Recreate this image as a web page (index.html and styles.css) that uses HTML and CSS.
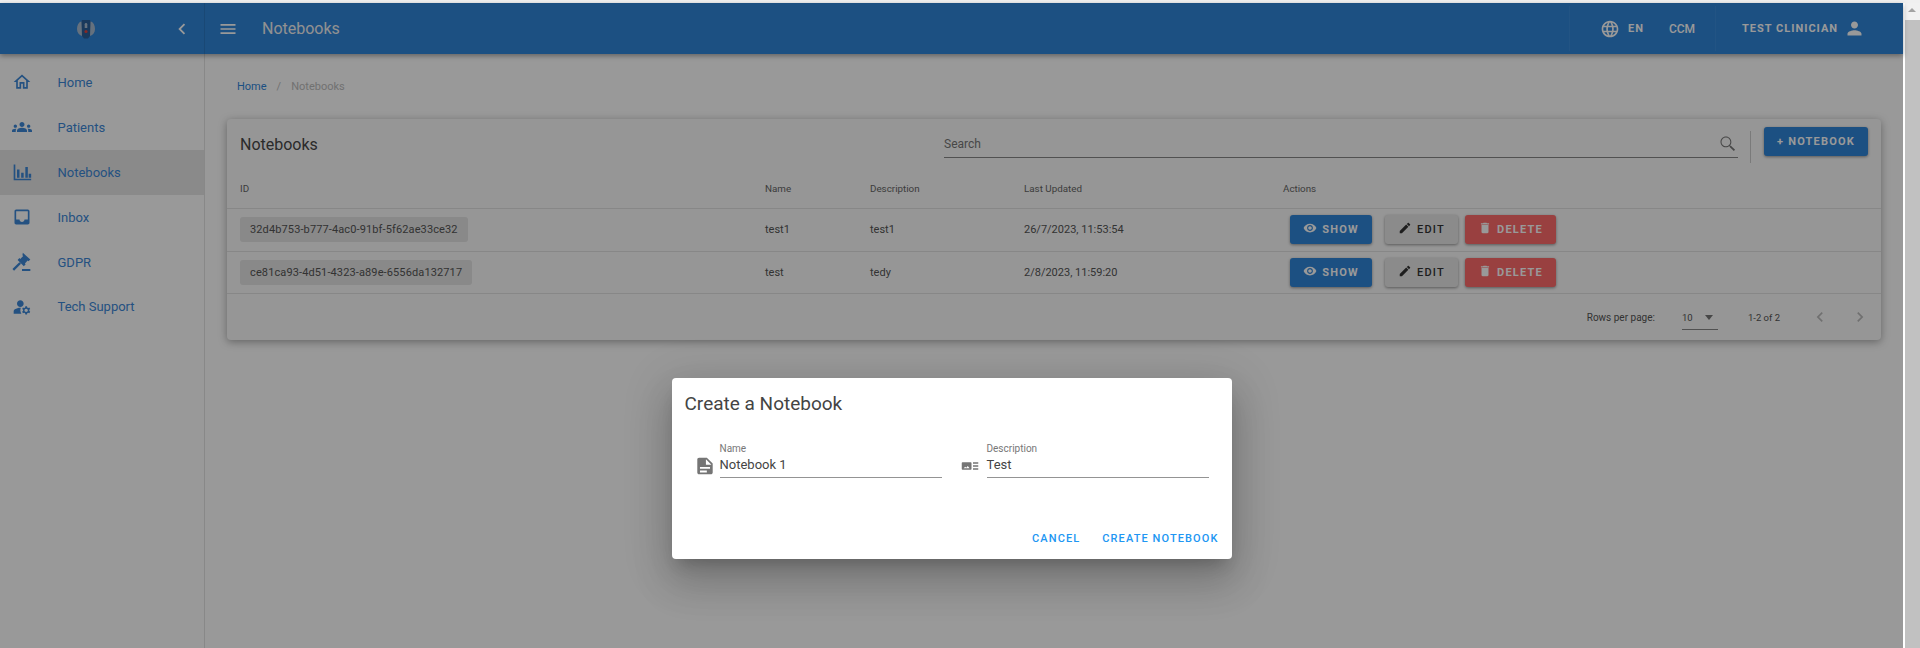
FILE: index.html
```html
<!DOCTYPE html>
<html lang="en">
<head>
<meta charset="utf-8">
<title>Notebooks</title>
<link rel="stylesheet" href="styles.css">
</head>
<body>
<svg class="sprite" width="0" height="0" aria-hidden="true">
  <defs>
    <symbol id="i-home" viewBox="0 0 24 24"><path d="M12 5.69l5 4.5V18h-2v-6H9v6H7v-7.81l5-4.5M12 3L2 12h3v8h6v-6h2v6h6v-8h3L12 3z"/></symbol>
    <symbol id="i-groups" viewBox="0 0 24 24"><path d="M12 12.75c1.63 0 3.07.39 4.24.9 1.08.48 1.76 1.56 1.76 2.73V18H6v-1.61c0-1.18.68-2.26 1.76-2.73 1.17-.52 2.61-.91 4.24-.91zM4 13c1.1 0 2-.9 2-2s-.9-2-2-2-2 .9-2 2 .9 2 2 2zm1.13 1.1c-.37-.06-.74-.1-1.13-.1-.99 0-1.93.21-2.78.58C.48 14.9 0 15.62 0 16.43V18h4.5v-1.61c0-.83.23-1.61.63-2.29zM20 13c1.1 0 2-.9 2-2s-.9-2-2-2-2 .9-2 2 .9 2 2 2zm4 3.43c0-.81-.48-1.53-1.22-1.85-.85-.37-1.79-.58-2.78-.58-.39 0-.76.04-1.13.1.4.68.63 1.46.63 2.29V18H24v-1.57zM12 6c1.66 0 3 1.34 3 3s-1.34 3-3 3-3-1.34-3-3 1.34-3 3-3z"/></symbol>
    <symbol id="i-chart" viewBox="0 0 24 24"><path d="M2 3h2v17h19v2H2zM6 9h3v10H6zM11 13h3v6h-3zM16 6h3v13h-3zM20 14h3v5h-3z"/></symbol>
    <symbol id="i-inbox" viewBox="0 0 24 24"><path d="M19 3H4.99c-1.11 0-1.98.89-1.98 2L3 19c0 1.1.88 2 1.99 2H19c1.1 0 2-.9 2-2V5c0-1.11-.9-2-2-2zm0 12h-4c0 1.66-1.35 3-3 3s-3-1.34-3-3H4.99V5H19v10z"/></symbol>
    <symbol id="i-gavel" viewBox="0 0 24 24"><path d="M13 1l9 8-2.200 2.200-1-.9-3.300 3.500.9 1-2.200 2.200-7.500-7.500 2.200-2.200 1 1 3.500-3.400-.9-1zM8.800 12.200l2 2-8.300 8.300-2-2zM12 20.500h10v2.300H12z"/></symbol>
    <symbol id="i-manage" viewBox="0 0 24 24"><path d="M10 12c2.21 0 4-1.79 4-4s-1.79-4-4-4-4 1.79-4 4 1.79 4 4 4zm.67 1.02c-.22-.01-.44-.02-.67-.02-2.42 0-4.68.67-6.61 1.82-.88.52-1.39 1.5-1.39 2.53V20h9.26c-.79-1.13-1.26-2.51-1.26-4 0-1.07.25-2.07.67-2.98zM20.75 16c0-.22-.03-.42-.06-.63l1.14-1.01-1-1.73-1.45.49c-.32-.27-.68-.48-1.08-.63L18 11h-2l-.3 1.49c-.4.15-.76.36-1.08.63l-1.45-.49-1 1.73 1.14 1.01c-.03.21-.06.41-.06.63s.03.42.06.63l-1.14 1.01 1 1.73 1.45-.49c.32.27.68.48 1.08.63L16 21h2l.3-1.49c.4-.15.76-.36 1.08-.63l1.45.49 1-1.73-1.14-1.01c.03-.21.06-.41.06-.63zM17 18c-1.1 0-2-.9-2-2s.9-2 2-2 2 .9 2 2-.9 2-2 2z"/></symbol>
    <symbol id="i-menu" viewBox="0 0 24 24"><path d="M3 18h18v-2H3v2zm0-5h18v-2H3v2zm0-7v2h18V6H3z"/></symbol>
    <symbol id="i-left" viewBox="0 0 24 24"><path d="M15.41 7.41L14 6l-6 6 6 6 1.41-1.41L10.83 12z"/></symbol>
    <symbol id="i-right" viewBox="0 0 24 24"><path d="M8.59 16.59L10 18l6-6-6-6-1.41 1.41L13.17 12z"/></symbol>
    <symbol id="i-globe" viewBox="0 0 24 24"><path d="M11.99 2C6.47 2 2 6.48 2 12s4.47 10 9.99 10C17.52 22 22 17.52 22 12S17.52 2 11.99 2zm6.93 6h-2.95c-.32-1.25-.78-2.45-1.38-3.56 1.84.63 3.37 1.91 4.33 3.56zM12 4.04c.83 1.2 1.48 2.53 1.91 3.96h-3.82c.43-1.43 1.08-2.76 1.91-3.96zM4.26 14C4.1 13.36 4 12.69 4 12s.1-1.36.26-2h3.38c-.08.66-.14 1.32-.14 2 0 .68.06 1.34.14 2H4.26zm.82 2h2.95c.32 1.25.78 2.45 1.38 3.56-1.84-.63-3.37-1.9-4.33-3.56zm2.95-8H5.08c.96-1.66 2.49-2.93 4.33-3.56C8.81 5.55 8.35 6.75 8.03 8zM12 19.96c-.83-1.2-1.48-2.53-1.91-3.96h3.82c-.43 1.43-1.08 2.76-1.91 3.96zM14.34 14H9.66c-.09-.66-.16-1.32-.16-2 0-.68.07-1.35.16-2h4.68c.09.65.16 1.32.16 2 0 .68-.07 1.34-.16 2zm.25 5.56c.6-1.11 1.06-2.31 1.38-3.56h2.95c-.96 1.65-2.49 2.93-4.33 3.56zM16.36 14c.08-.66.14-1.32.14-2 0-.68-.06-1.34-.14-2h3.38c.16.64.26 1.31.26 2s-.1 1.36-.26 2h-3.38z"/></symbol>
    <symbol id="i-person" viewBox="0 0 24 24"><path d="M12 12c2.21 0 4-1.79 4-4s-1.79-4-4-4-4 1.79-4 4 1.79 4 4 4zm0 2c-2.67 0-8 1.34-8 4v2h16v-2c0-2.66-5.33-4-8-4z"/></symbol>
    <symbol id="i-search" viewBox="0 0 24 24"><path d="M15.5 14h-.79l-.28-.27C15.41 12.59 16 11.11 16 9.5 16 5.91 13.09 3 9.5 3S3 5.910 3 9.500 5.910 16 9.500 16c1.610 0 3.090-.59 4.230-1.570l.27.28v.79l5 4.990L20.490 19l-4.990-5zm-6 .8C6.570 14.800 4.200 12.430 4.200 9.500S6.570 4.200 9.500 4.200 14.800 6.570 14.800 9.500 12.430 14.800 9.500 14.800z"/></symbol>
    <symbol id="i-eye" viewBox="0 0 24 24"><path d="M12 4.5C7 4.5 2.73 7.61 1 12c1.73 4.39 6 7.5 11 7.5s9.27-3.11 11-7.5c-1.73-4.39-6-7.5-11-7.5zM12 17c-2.76 0-5-2.24-5-5s2.24-5 5-5 5 2.24 5 5-2.24 5-5 5zm0-8c-1.66 0-3 1.34-3 3s1.34 3 3 3 3-1.34 3-3-1.34-3-3-3z"/></symbol>
    <symbol id="i-edit" viewBox="0 0 24 24"><path d="M3 17.25V21h3.75L17.81 9.94l-3.75-3.75L3 17.25zM20.71 7.04c.39-.39.39-1.02 0-1.41l-2.34-2.34c-.39-.39-1.02-.39-1.41 0l-1.83 1.83 3.75 3.75 1.83-1.83z"/></symbol>
    <symbol id="i-delete" viewBox="0 0 24 24"><path d="M6 19c0 1.1.9 2 2 2h8c1.1 0 2-.9 2-2V7H6v12zM19 4h-3.5l-1-1h-5l-1 1H5v2h14V4z"/></symbol>
    <symbol id="i-doc" viewBox="0 0 24 24"><path fill-rule="evenodd" d="M5.500 3H14l6.400 6.400V19c0 1.100-.9 2-2 2H5.500c-1.100 0-1.900-.9-1.900-2V5c0-1.100.8-2 1.900-2zM13 4.500V10.500h6zM6.500 13v2h11v-2zM6.500 17v2h7.500v-2z"/></symbol>
    <symbol id="i-desc" viewBox="0 0 24 24"><path d="M2 7h11c.6 0 1 .4 1 1v8c0 .6-.4 1-1 1H2c-.6 0-1-.4-1-1V8c0-.6.4-1 1-1zm1.5 8h8l-2.5-3-2 2.4-1.3-1.4zM16 7h7v2h-7zM16 11h7v2h-7zM16 15h7v2h-7z"/></symbol>
  </defs>
</svg>

<div class="window-edge"></div>
<div class="window">
  <div class="app">
    <header class="appbar">
      <div class="brand">
        <svg class="logo" viewBox="0 0 18 20" width="18" height="20">
          <path class="logo-light" d="M4 2.500C1.500 3.500 0 6.500 0 10c0 3.500 2 6 5 7V2.500zM14 2.500c2.500 1 4 4 4 7.500 0 3.500-2 6-5 7V2.500z"/>
          <path class="logo-dark" d="M5 1h8l.5 1.500-.5 14.500-2 2.500H7L5 17 4.500 2.500z"/>
          <path class="logo-light" d="M9 4a1.300 1.300 0 011.300 1.300V9H7.700V5.300A1.300 1.300 0 019 4z"/>
          <circle class="logo-red" cx="9" cy="12.500" r="1.600"/>
        </svg>
        <svg class="icon brand-toggle"><use href="#i-left"/></svg>
      </div>
      <svg class="icon menu-icon"><use href="#i-menu"/></svg>
      <h1 class="page-title">Notebooks</h1>
      <div class="bar-section bar-locale">
        <svg class="icon globe"><use href="#i-globe"/></svg>
        <span class="bar-lang">EN</span>
        <span class="bar-org">CCM</span>
      </div>
      <div class="bar-section bar-user">
        <span class="bar-name">TEST CLINICIAN</span>
        <svg class="icon person"><use href="#i-person"/></svg>
      </div>
    </header>

    <div class="body-row">
      <nav class="sidebar">
        <a class="nav-item"><svg class="icon nav-icon"><use href="#i-home"/></svg><span>Home</span></a>
        <a class="nav-item"><svg class="icon nav-icon"><use href="#i-groups"/></svg><span>Patients</span></a>
        <a class="nav-item is-active"><svg class="icon nav-icon"><use href="#i-chart"/></svg><span>Notebooks</span></a>
        <a class="nav-item"><svg class="icon nav-icon"><use href="#i-inbox"/></svg><span>Inbox</span></a>
        <a class="nav-item"><svg class="icon nav-icon"><use href="#i-gavel"/></svg><span>GDPR</span></a>
        <a class="nav-item"><svg class="icon nav-icon"><use href="#i-manage"/></svg><span>Tech Support</span></a>
      </nav>

      <main class="content">
        <div class="breadcrumb"><a class="crumb-link">Home</a><span class="crumb-sep">/</span><span class="crumb-current">Notebooks</span></div>

        <section class="card">
          <div class="toolbar">
            <h2 class="card-title">Notebooks</h2>
            <div class="search">
              <span class="search-label">Search</span>
              <svg class="icon search-icon"><use href="#i-search"/></svg>
            </div>
            <div class="toolbar-divider"></div>
            <button class="btn btn-primary btn-add">+ NOTEBOOK</button>
          </div>

          <div class="row row-head">
            <div>ID</div><div>Name</div><div>Description</div><div>Last Updated</div><div class="col-actions-head">Actions</div>
          </div>
          <div class="row row-body">
            <div><span class="chip">32d4b753-b777-4ac0-91bf-5f62ae33ce32</span></div>
            <div>test1</div><div>test1</div><div>26/7/2023, 11:53:54</div>
            <div class="actions">
              <button class="btn btn-primary btn-show"><svg class="icon btn-icon"><use href="#i-eye"/></svg>SHOW</button>
              <button class="btn btn-grey btn-edit"><svg class="icon btn-icon"><use href="#i-edit"/></svg>EDIT</button>
              <button class="btn btn-red btn-del"><svg class="icon btn-icon"><use href="#i-delete"/></svg>DELETE</button>
            </div>
          </div>
          <div class="row row-body">
            <div><span class="chip">ce81ca93-4d51-4323-a89e-6556da132717</span></div>
            <div>test</div><div>tedy</div><div>2/8/2023, 11:59:20</div>
            <div class="actions">
              <button class="btn btn-primary btn-show"><svg class="icon btn-icon"><use href="#i-eye"/></svg>SHOW</button>
              <button class="btn btn-grey btn-edit"><svg class="icon btn-icon"><use href="#i-edit"/></svg>EDIT</button>
              <button class="btn btn-red btn-del"><svg class="icon btn-icon"><use href="#i-delete"/></svg>DELETE</button>
            </div>
          </div>

          <div class="pager">
            <span class="pager-label">Rows per page:</span>
            <span class="pager-select">10<span class="caret"></span></span>
            <span class="pager-range">1-2 of 2</span>
            <svg class="icon pager-arrow"><use href="#i-left"/></svg>
            <svg class="icon pager-arrow"><use href="#i-right"/></svg>
          </div>
        </section>
      </main>
    </div>

    <div class="overlay">
      <div class="dialog">
        <h3 class="dialog-title">Create a Notebook</h3>
        <div class="dialog-fields">
          <div class="field">
            <svg class="icon field-icon"><use href="#i-doc"/></svg>
            <div class="field-box"><label class="field-label">Name</label><div class="field-value">Notebook 1</div></div>
          </div>
          <div class="field">
            <svg class="icon field-icon field-icon-desc"><use href="#i-desc"/></svg>
            <div class="field-box"><label class="field-label">Description</label><div class="field-value">Test</div></div>
          </div>
        </div>
        <div class="dialog-actions">
          <button class="text-btn">CANCEL</button>
          <button class="text-btn">CREATE NOTEBOOK</button>
        </div>
      </div>
    </div>
  </div>

  <div class="scrollbar">
    <div class="scroll-up"></div>
    <div class="scroll-thumb"></div>
  </div>
</div>
</body>
</html>
```
FILE: styles.css
```css
* { box-sizing: border-box; }
html, body { margin: 0; height: 648px; overflow: hidden; }
body { font-family: Roboto, "Liberation Sans", sans-serif; color: #000; background: #fff; display: flex; flex-direction: column; }
h1, h2, h3 { margin: 0; font-weight: 400; }
button { font-family: inherit; border: 0; padding: 0; background: none; }
.sprite { position: absolute; }
.icon { display: block; fill: currentColor; flex: none; width: 24px; height: 24px; }

.window-edge { height: 3px; background: #f0f0f0; flex: none; }
.window { flex: 1; display: flex; min-height: 0; }
.app { flex: 1; position: relative; display: flex; flex-direction: column; min-width: 0; background: #fff; }

/* App bar */
.appbar { height: 51px; flex: none; display: flex; align-items: center; background: #2f85d9; color: #fff; box-shadow: 0 2px 5px rgba(0,0,0,.35); position: relative; z-index: 2; }
.brand { width: 205px; height: 100%; display: flex; align-items: center; border-right: 1px solid #2a78c4; flex: none; }
.logo { margin-left: 77px; margin-top: 1px; }
.logo-dark { fill: #2a5f99; }
.logo-light { fill: #a9bdd2; }
.logo-red { fill: #e0443e; }
.brand-toggle { width: 22px; height: 22px; margin-left: 76px; }
.menu-icon { width: 20px; height: 20px; margin-left: 13px; }
.page-title { font-size: 16px; margin-left: 24px; font-weight: 400; color: #f2f2f2; }
.bar-section { height: 45px; display: flex; align-items: center; border-left: 1px solid #3a8ddc; }
.bar-locale { margin-left: auto; width: 146px; padding-left: 30px; }
.bar-user { width: 188px; padding-left: 26px; }
.globe { width: 20px; height: 20px; }
.bar-lang { font-size: 11px; font-weight: 700; letter-spacing: 1px; margin-left: 8px; }
.bar-org { font-size: 12px; font-weight: 500; margin-left: 25px; }
.bar-name { font-size: 11px; font-weight: 700; letter-spacing: 1px; }
.person { width: 21px; height: 21px; margin-left: 6px; }

/* Layout */
.body-row { flex: 1; display: flex; min-height: 0; }
.sidebar { width: 205px; flex: none; padding-top: 6px; background: #fff; border-right: 1px solid #e3e3e3; }
.nav-item { height: 44.900px; display: flex; align-items: center; padding-left: 12px; color: #3d88d8; font-size: 13px; }
.nav-item.is-active { background: #e6e6e6; }
.nav-icon { width: 20px; height: 20px; margin-right: 25.500px; }
.content { flex: 1; min-width: 0; padding: 26px 22px 0; background: #fff; }

.breadcrumb { font-size: 11px; line-height: 14px; padding-left: 10px; color: #bdbdbd; display: flex; }
.crumb-link { color: #2f85d9; }
.crumb-sep { margin: 0 10px; }

/* Card */
.card { margin-top: 25px; height: 221px; border-radius: 4px; background: #fafafa; box-shadow: 0 2px 8px rgba(0,0,0,.35); }
.toolbar { height: 47px; display: flex; align-items: center; padding: 0 13px; }
.card-title { flex: 0 0 704px; font-size: 16px; color: #484848; margin-top: 3px; }
.search { flex: 1; height: 24px; margin-top: 7px; position: relative; border-bottom: 1px solid #888; display: flex; align-items: center; justify-content: space-between; }
.search-label { font-size: 12px; color: #777; margin-top: -3px; }
.search-icon { width: 20px; height: 20px; color: #777; margin-top: -3px; }
.toolbar-divider { width: 1px; height: 32px; background: #ccc; margin: 9px 13px 0 12px; }
.btn { display: inline-flex; align-items: center; justify-content: center; height: 29px; border-radius: 3px; font-size: 11px; font-weight: 700; letter-spacing: 1.200px; box-shadow: 0 1px 3px rgba(0,0,0,.4); }
.btn-primary { background: #2f85d9; color: #fff; }
.btn-grey { background: #e8e8e8; color: #333; font-weight: 500; }
.btn-red { background: #ff6b6b; color: #fff; }
.btn-add { width: 104px; margin-top: -2px; }
.btn-icon { width: 14px; height: 14px; margin: -3px 5px 0 0; }
.btn-show { width: 82px; }
.btn-edit { width: 73px; margin-left: 13px; }
.btn-del { width: 91px; margin-left: 7px; }

.row { display: grid; grid-template-columns: 525px 105px 154px 259px 1fr; align-items: center; padding-left: 13px; font-size: 11px; color: #555; border-bottom: 1px solid #e2e2e2; }
.row-head { height: 43px; padding-top: 3px; font-size: 9.800px; font-weight: 400; color: #666; }
.row-body { height: 42.500px; }
.chip { display: inline-block; height: 25px; line-height: 25px; padding: 0 10px; border-radius: 3px; background: #e4e4e4; color: #555; letter-spacing: .12px; }
.actions { display: flex; padding-left: 7px; }

.pager { height: 46px; display: flex; align-items: center; justify-content: flex-end; padding-right: 11px; font-size: 9.500px; color: #555; }
.pager-label { font-size: 10px; }
.pager-select { width: 36px; height: 25px; margin-left: 27px; display: flex; align-items: center; justify-content: space-between; border-bottom: 1px solid #888; padding-right: 5px; margin-top: 1px; }
.caret { width: 0; height: 0; border: 4px solid transparent; border-top: 5px solid #777; border-bottom: 0; }
.pager-range { margin: 0 30px; }
.pager-arrow { width: 20px; height: 20px; color: #bbb; margin-left: 20px; }
.pager-arrow:first-of-type { margin-left: 0; }

/* Dialog */
.overlay { position: absolute; inset: 0; background: rgba(0,0,0,.4); display: flex; justify-content: center; align-items: flex-start; padding-top: 375px; z-index: 5; }
.dialog { width: 560px; height: 181px; background: #fff; border-radius: 4px; box-shadow: 0 11px 15px -7px rgba(0,0,0,.2), 0 24px 38px 3px rgba(0,0,0,.14), 0 9px 46px 8px rgba(0,0,0,.12); display: flex; flex-direction: column; }
.dialog-title { font-size: 19px; line-height: 24px; padding: 14px 13px 0; color: #444; }
.dialog-fields { display: flex; padding: 27px 0 0 22px; }
.field { display: flex; align-items: flex-end; width: 267px; }
.field-icon { width: 22px; height: 22px; color: #757575; margin: 0 4px 1px 0; }
.field-icon-desc { width: 18px; height: 18px; margin: 0 8px 3px 0; }
.field-box { width: 222px; height: 35px; border-bottom: 1px solid #949494; }
.field-label { display: block; font-size: 10px; line-height: 12px; color: #777; }
.field-value { font-size: 13px; line-height: 19px; color: #444; }
.dialog-actions { margin-top: auto; display: flex; justify-content: flex-end; gap: 22px; padding: 0 13px 12px 0; }
.text-btn { font-size: 11px; font-weight: 500; letter-spacing: 1.100px; color: #2196f3; line-height: 16px; }

/* Scrollbar */
.scrollbar { width: 17px; flex: none; background: #f1f1f1; border-left: 2px solid #fff; display: flex; flex-direction: column; }
.scroll-up { height: 17px; position: relative; flex: none; }
.scroll-up::after { content: ""; position: absolute; left: 3px; top: 5px; border: 4px solid transparent; border-top: 0; border-bottom: 4px solid #a3a3a3; }
.scroll-thumb { flex: 1; background: #c1c1c1; }
```
